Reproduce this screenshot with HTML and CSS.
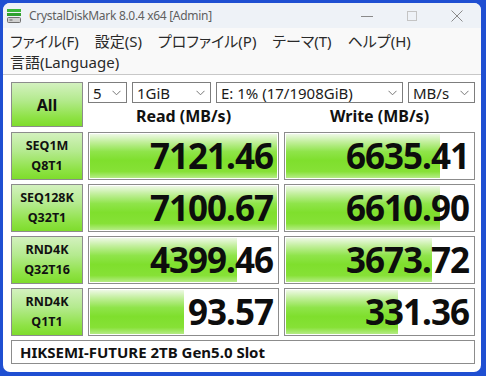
FILE: index.html
```html
<!DOCTYPE html>
<html>
<head>
<meta charset="utf-8">
<link rel="stylesheet" href="styles.css">
</head>
<body>
<div class="window">
  <div class="titlebar">
    <svg class="app-icon" width="14" height="14" viewBox="0 0 14 14">
      <rect x="0" y="0" width="14" height="3" fill="#3cb83c"/>
      <rect x="0" y="4" width="14" height="3" fill="#2fa02f"/>
      <rect x="0.5" y="8.5" width="13" height="5" rx="1" fill="#d0d0d0" stroke="#707070"/>
      <rect x="2.5" y="10.5" width="3" height="1" fill="#606060"/>
    </svg>
    <span class="title">CrystalDiskMark 8.0.4 x64 [Admin]</span>
    <div class="controls">
      <svg class="ctl" width="14" height="14" viewBox="0 0 14 14"><line x1="1" y1="7.5" x2="13" y2="7.5" stroke="#8a8a8a" stroke-width="1"/></svg>
      <svg class="ctl" width="14" height="14" viewBox="0 0 14 14"><rect x="2.5" y="2.5" width="9" height="9" fill="none" stroke="#c4c4c4" stroke-width="1"/></svg>
      <svg class="ctl" width="14" height="14" viewBox="0 0 14 14"><path d="M1.5 1.5 L12.5 12.5 M12.5 1.5 L1.5 12.5" stroke="#8a8a8a" stroke-width="1"/></svg>
    </div>
  </div>
  <div class="menu">
    <div class="menu-line">
      <span>ファイル(F)</span><span>設定(S)</span><span>プロファイル(P)</span><span>テーマ(T)</span><span>ヘルプ(H)</span>
    </div>
    <div class="menu-line">
      <span>言語(Language)</span>
    </div>
  </div>
  <div class="content">
    <div class="grid">
      <div class="btn all">All</div>
      <div class="top">
        <div class="combos">
          <div class="combo c1"><span>5</span><svg width="9" height="6" viewBox="0 0 9 6"><path d="M0.5 0.8 L4.5 4.8 L8.5 0.8" fill="none" stroke="#777" stroke-width="1"/></svg></div>
          <div class="combo c2"><span>1GiB</span><svg width="9" height="6" viewBox="0 0 9 6"><path d="M0.5 0.8 L4.5 4.8 L8.5 0.8" fill="none" stroke="#777" stroke-width="1"/></svg></div>
          <div class="combo c3"><span>E: 1% (17/1908GiB)</span><svg width="9" height="6" viewBox="0 0 9 6"><path d="M0.5 0.8 L4.5 4.8 L8.5 0.8" fill="none" stroke="#777" stroke-width="1"/></svg></div>
          <div class="combo c4"><span>MB/s</span><svg width="9" height="6" viewBox="0 0 9 6"><path d="M0.5 0.8 L4.5 4.8 L8.5 0.8" fill="none" stroke="#777" stroke-width="1"/></svg></div>
        </div>
        <div class="heads">
          <div class="head">Read (MB/s)</div>
          <div class="head">Write (MB/s)</div>
        </div>
      </div>

      <div class="btn lbl">SEQ1M<br>Q8T1</div>
      <div class="val"><div class="bar" style="width:100%"></div><span>7121.46</span></div>
      <div class="val"><div class="bar" style="width:154px"></div><span>6635.41</span></div>

      <div class="btn lbl">SEQ128K<br>Q32T1</div>
      <div class="val"><div class="bar" style="width:100%"></div><span>7100.67</span></div>
      <div class="val"><div class="bar" style="width:154px"></div><span>6610.90</span></div>

      <div class="btn lbl">RND4K<br>Q32T16</div>
      <div class="val"><div class="bar" style="width:147px"></div><span>4399.46</span></div>
      <div class="val"><div class="bar" style="width:146px"></div><span>3673.72</span></div>

      <div class="btn lbl">RND4K<br>Q1T1</div>
      <div class="val"><div class="bar" style="width:94px"></div><span>93.57</span></div>
      <div class="val"><div class="bar" style="width:112px"></div><span>331.36</span></div>

      <div class="name">HIKSEMI-FUTURE 2TB Gen5.0 Slot</div>
    </div>
  </div>
</div>
</body>
</html>
```

FILE: styles.css
```css
html, body {
  margin: 0;
  padding: 0;
}
body {
  width: 486px;
  height: 376px;
  background: #1f4fd2;
  overflow: hidden;
  font-family: "Noto Sans", "Noto Sans CJK JP", sans-serif;
}
.window {
  position: relative;
  margin: 3px 0 0 3px;
  width: 478px;
  height: 369px;
  background: #ffffff;
  border-radius: 7px;
  overflow: hidden;
}
.titlebar {
  height: 25px;
  background: #eef2f7;
  display: flex;
  align-items: center;
  padding-left: 4px;
}
.app-icon {
  margin-top: 1px;
}
.title {
  margin-left: 8px;
  font-size: 12px;
  color: #5f5f5f;
  letter-spacing: -0.3px;
}
.controls {
  margin-left: auto;
  display: flex;
  gap: 31px;
  padding-right: 17px;
}
.menu {
  background: #f9f9f9;
  border-bottom: 1px solid #c8c8c8;
  padding: 3px 0 1px 7px;
  height: 42px;
}
.menu-line {
  display: flex;
  gap: 16px;
  height: 21px;
  line-height: 21px;
  font-family: "Noto Sans", "Noto Sans CJK JP", sans-serif;
  font-size: 15px;
  color: #2a2a2a;
  font-feature-settings: "palt";
}
.content {
  padding: 7px 0 0 8px;
}
.grid {
  display: grid;
  grid-template-columns: 72px 191px 191px;
  grid-template-rows: 46px 48px 48px 48px 48px 24px;
  column-gap: 5px;
  row-gap: 4px;
}
.grid > .btn.all {
  margin-bottom: 1px;
}
.btn {
  box-sizing: border-box;
  border: 1px solid #8c8c8c;
  background: linear-gradient(to bottom, #d3f1bf 0%, #b4ea8e 40%, #8ee245 80%, #7edc2c 100%);
  color: #111;
  font-weight: bold;
  display: flex;
  align-items: center;
  justify-content: center;
  text-align: center;
}
.all {
  font-size: 16px;
}
.lbl {
  font-size: 12.5px;
  line-height: 20px;
}
.top {
  grid-column: 2 / 4;
  display: flex;
  flex-direction: column;
}
.combos {
  display: flex;
  gap: 5px;
  height: 21px;
}
.combo {
  box-sizing: border-box;
  height: 21px;
  border: 1px solid #7d7d7d;
  background: #fff;
  display: flex;
  align-items: center;
  justify-content: space-between;
  padding: 0 5px 0 4px;
  font-size: 15px;
  color: #1a1a1a;
}
.c1 { width: 39px; }
.c2 { width: 79px; }
.c3 { width: 187px; }
.c4 { width: 67px; }
.heads {
  display: flex;
  gap: 5px;
  flex: 1;
}
.head {
  width: 191px;
  text-align: center;
  font-weight: bold;
  font-size: 16px;
  line-height: 24px;
  padding-top: 1px;
  color: #111;
}
.val {
  position: relative;
  box-sizing: border-box;
  border: 1px solid #8c8c8c;
  background: #fff;
  display: flex;
  align-items: center;
  justify-content: flex-end;
  padding-right: 5px;
  overflow: hidden;
}
.bar {
  position: absolute;
  left: 1px;
  top: 1px;
  bottom: 1px;
  max-width: calc(100% - 2px);
  background: linear-gradient(to bottom, #eef9e6 0%, #c2ef9c 18%, #8fe44a 40%, #7fdf2d 60%, #86e136 85%, #b5ec85 100%);
}
.val span {
  position: relative;
  font-weight: bold;
  font-size: 35px;
  letter-spacing: -1px;
  line-height: 40px;
  color: #0d0d0d;
}
.name {
  grid-column: 1 / 4;
  box-sizing: border-box;
  border: 1px solid #8c8c8c;
  background: #fff;
  font-weight: bold;
  font-size: 15px;
  line-height: 22px;
  padding-left: 8px;
  color: #111;
}
```
